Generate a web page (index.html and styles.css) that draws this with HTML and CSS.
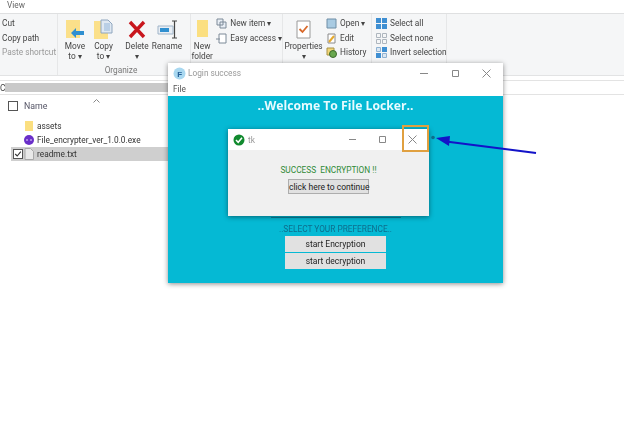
FILE: index.html
```html
<!DOCTYPE html>
<html lang="en">
<head>
    <meta charset="UTF-8">
    <title>File Locker</title>
    <link rel="stylesheet" href="styles.css">
</head>
<body>
    <div class="explorer">
        <div class="tabs">View</div>
        <div class="ribbon">
            <div class="group group-clip">
                <div class="small-list">
                    <span>Cut</span>
                    <span>Copy path</span>
                    <span class="muted">Paste shortcut</span>
                </div>
            </div>
            <div class="group group-organize">
                <div class="big-row">
                    <div class="big big-move">
                        <svg width="20" height="21" viewBox="0 0 20 21"><path d="M1 1h14v18H1z" fill="#fbe08a"/><path d="M19 12h-8V9l-5 5 5 5v-3h8z" fill="#2f8fd0"/></svg>
                        <span>Move<br>to ▾</span>
                    </div>
                    <div class="big big-copy">
                        <svg width="20" height="21" viewBox="0 0 20 21"><path d="M0 2h14v18H0z" fill="#fbe08a"/><path d="M7 1h7l4 4v9H7z" fill="#dfe8f2" stroke="#8fa6bf"/><path d="M10 4h6v8h-6z" fill="#b9cfe6"/></svg>
                        <span>Copy<br>to ▾</span>
                    </div>
                    <div class="big big-delete">
                        <svg width="18" height="21" viewBox="0 0 18 21"><path d="M2 3l14 15M16 3L2 18" stroke="#c8161d" stroke-width="3.4" fill="none"/></svg>
                        <span>Delete<br>▾</span>
                    </div>
                    <div class="big big-rename">
                        <svg width="21" height="21" viewBox="0 0 21 21"><path d="M1 7h15v8H1z" fill="#e8eef5" stroke="#9fb4c8"/><path d="M3 9h9v4H3z" fill="#2f8fd0"/><path d="M15 2h5M15 19h5M17.500 2v17" stroke="#444" stroke-width="1.200" fill="none"/></svg>
                        <span>Rename</span>
                    </div>
                </div>
                <div class="group-name">Organize</div>
            </div>
            <div class="group group-new">
                <div class="big big-folder">
                    <svg width="13" height="21" viewBox="0 0 13 21"><path d="M1 1h11v17H1z" fill="#fbdf80"/></svg>
                    <span>New<br>folder</span>
                </div>
                <div class="small-list">
                    <span class="with-icon">
                        <svg width="11" height="11" viewBox="0 0 11 11"><path d="M1 1h6v6H1zM4 4h6v6H4z" fill="#e8eef5" stroke="#7d8a98"/></svg>New item ▾
                    </span>
                    <span class="with-icon">
                        <svg width="11" height="11" viewBox="0 0 11 11"><path d="M3 1h7v9H3z" fill="#fff" stroke="#7d8a98"/><path d="M0 6h4" stroke="#7d8a98"/></svg>Easy access ▾
                    </span>
                </div>
            </div>
            <div class="group group-open">
                <div class="big big-props">
                    <svg width="15" height="21" viewBox="0 0 15 21"><path d="M1 2h13v17H1z" fill="#fff" stroke="#9a9a9a"/><path d="M3.500 10l3 3 5-6" stroke="#d9692a" stroke-width="1.800" fill="none"/></svg>
                    <span>Properties<br>▾</span>
                </div>
                <div class="small-list">
                    <span class="with-icon">
                        <svg width="11" height="11" viewBox="0 0 11 11"><path d="M1 1h9v9H1z" fill="#a9cbe2" stroke="#6f8ea6"/></svg>Open ▾
                    </span>
                    <span class="with-icon">
                        <svg width="11" height="11" viewBox="0 0 11 11"><path d="M2 1h7v9H2z" fill="#fff" stroke="#8a8a8a"/><path d="M3 9l5-6" stroke="#e5a92e" stroke-width="2"/></svg>Edit
                    </span>
                    <span class="with-icon">
                        <svg width="11" height="11" viewBox="0 0 11 11"><path d="M1 1h7v7H1z" fill="#f2d77a" stroke="#a89245"/><circle cx="7" cy="7" r="3.500" fill="#6aa84f" stroke="#3d6b2c"/></svg>History
                    </span>
                </div>
            </div>
            <div class="group group-select">
                <div class="small-list">
                    <span class="with-icon">
                        <svg width="11" height="11" viewBox="0 0 11 11"><path d="M0 0h5v5H0zM6 0h5v5H6zM0 6h5v5H0zM6 6h5v5H6z" fill="#3f8fd2"/></svg>Select all
                    </span>
                    <span class="with-icon">
                        <svg width="11" height="11" viewBox="0 0 11 11"><path d="M.5.500h4v4h-4zM6.500.500h4v4h-4zM.5 6.500h4v4h-4zM6.500 6.500h4v4h-4z" fill="none" stroke="#aeb6be"/></svg>Select none
                    </span>
                    <span class="with-icon">
                        <svg width="11" height="11" viewBox="0 0 11 11"><path d="M6 0h5v5H6zM0 6h5v5H0z" fill="#3f8fd2"/><path d="M.5.500h4v4h-4zM6.500 6.500h4v4h-4z" fill="#dbe7f2" stroke="#8fb2d2"/></svg>Invert selection
                    </span>
                </div>
            </div>
        </div>
        <div class="address">
            <span class="address-c">C</span>
            <div class="address-blur"></div>
        </div>
        <div class="files">
            <svg class="sort" width="7" height="4" viewBox="0 0 7 4"><path d="M.5 3.500l3-3 3 3" stroke="#888" fill="none"/></svg>
            <div class="file-head">
                <span class="check"></span>
                <span>Name</span>
            </div>
            <div class="file-row">
                <span class="check-space"></span>
                <svg width="10" height="12" viewBox="0 0 10 12"><path d="M1 1h8v10H1z" fill="#fbdf80"/></svg>
                <span>assets</span>
            </div>
            <div class="file-row">
                <span class="check-space"></span>
                <svg width="10" height="12" viewBox="0 0 10 12"><circle cx="5" cy="6" r="5" fill="#6a2fc9"/><path d="M2 6h2M6 6h2" stroke="#e6d5ff"/></svg>
                <span>File_encrypter_ver_1.0.0.exe</span>
            </div>
            <div class="file-row selected">
                <span class="check checked">
                    <svg width="8" height="8" viewBox="0 0 10 10"><path d="M1.500 5l2.500 2.500 4.500-5.500" stroke="#333" stroke-width="1.400" fill="none"/></svg>
                </span>
                <svg width="10" height="12" viewBox="0 0 10 12"><path d="M1 .5h5.500l3 3v8H1z" fill="#e9e9e9" stroke="#a9a9a9"/></svg>
                <span>readme.txt</span>
            </div>
        </div>
    </div>

    <div class="window login">
        <div class="titlebar login-bar">
            <svg width="13" height="13" viewBox="0 0 13 13"><circle cx="6.500" cy="6.500" r="6" fill="#a9d8f0"/><text x="4.300" y="9.500" class="logo-f">F</text></svg>
            <span class="title">Login success</span>
            <div class="controls">
                <svg width="9" height="9" viewBox="0 0 9 9"><path d="M0 4.500h8" stroke="#888"/></svg>
                <svg width="9" height="9" viewBox="0 0 9 9"><path d="M1.500 1.500h6v6h-6z" stroke="#888" fill="none"/></svg>
                <svg width="9" height="9" viewBox="0 0 9 9"><path d="M.5.500l8 8M8.500.500l-8 8" stroke="#888" fill="none"/></svg>
            </div>
        </div>
        <div class="menu">File</div>
        <div class="teal">
            <h1>..Welcome To File Locker..</h1>
            <div class="hidden-line"></div>
            <p class="select-text">..SELECT YOUR PREFERENCE..</p>
            <button class="pref-btn">start Encryption</button>
            <button class="pref-btn">start decryption</button>
        </div>
    </div>

    <div class="window popup">
        <div class="titlebar popup-bar">
            <svg width="12" height="12" viewBox="0 0 12 12"><circle cx="6" cy="6" r="5.500" fill="#118a2e"/><path d="M3 6l2.200 2.300L9 3.800" stroke="#fff" stroke-width="1.500" fill="none"/></svg>
            <span class="title">tk</span>
            <div class="controls popup-controls">
                <svg width="9" height="9" viewBox="0 0 9 9"><path d="M1 4.500h7" stroke="#888"/></svg>
                <svg width="9" height="9" viewBox="0 0 9 9"><path d="M1.500 1.500h6v6h-6z" stroke="#888" fill="none"/></svg>
                <svg width="9" height="9" viewBox="0 0 9 9"><path d="M.5.500l8 8M8.500.500l-8 8" stroke="#888" fill="none"/></svg>
            </div>
        </div>
        <div class="popup-body">
            <p class="success">SUCCESS&nbsp; ENCRYPTION !!</p>
            <button class="continue">click here to continue</button>
        </div>
    </div>

    <div class="close-mark"></div>
    <svg class="arrow" width="112" height="24" viewBox="0 0 112 24">
        <circle cx="5" cy="3.500" r="1.800" fill="#0e6d8c"/>
        <path d="M108 19L18 7.500" stroke="#1313c8" stroke-width="2.200" fill="none"/>
        <path d="M8 4l14-2-1 10z" fill="#1313c8"/>
    </svg>
</body>
</html>
```

FILE: styles.css
```css
body {
    margin: 0;
    width: 624px;
    height: 425px;
    overflow: hidden;
    position: relative;
    background: #fff;
    font-family: Roboto, "Open Sans", sans-serif;
    font-size: 8.3px;
    color: #444;
    filter: blur(0.3px);
}
.tabs {
    height: 13px;
    padding-left: 7px;
    line-height: 11px;
    color: #666;
}
.ribbon {
    height: 61px;
    display: flex;
    background: #f5f6f7;
    border-top: 1px solid #dfe0e1;
    border-bottom: 1px solid #e2e3e4;
}
.group {
    display: flex;
    border-right: 1px solid #e6e7e8;
    padding-top: 2px;
    box-sizing: border-box;
}
.group-clip {
    width: 58px;
    padding-left: 2px;
}
.group-organize {
    width: 133px;
    flex-direction: column;
}
.group-new {
    width: 92px;
    gap: 3px;
}
.group-open {
    width: 89px;
    gap: 3px;
}
.group-select {
    width: 75px;
    padding-left: 4px;
}
.small-list {
    display: flex;
    flex-direction: column;
    line-height: 14.7px;
    white-space: nowrap;
}
.with-icon {
    display: flex;
    align-items: center;
    gap: 3px;
}
.muted {
    color: #999;
}
.big-row {
    display: flex;
    height: 49px;
}
.big {
    display: flex;
    flex-direction: column;
    align-items: center;
    text-align: center;
    line-height: 9.500px;
    gap: 2px;
    padding-top: 3px;
}
.big-move {
    width: 30px;
    margin-left: 2px;
}
.big-copy {
    width: 27px;
}
.big-delete {
    width: 28px;
    margin-left: 6px;
}
.big-rename {
    width: 30px;
    margin-left: 1px;
}
.big-folder {
    width: 24px;
}
.big-props {
    width: 39px;
    margin-left: 1px;
}
.group-name {
    text-align: center;
    color: #777;
    line-height: 10px;
    padding-right: 6px;
}
.address {
    margin-top: 4px;
    height: 13px;
    border-top: 1px solid #e3e3e3;
    border-bottom: 1px solid #e3e3e3;
    display: flex;
    align-items: center;
}
.address-c {
    width: 5px;
    overflow: hidden;
}
.address-blur {
    width: 163px;
    height: 9px;
    background: #c9c9c9;
}
.files {
    position: relative;
    padding-top: 4px;
}
.sort {
    position: absolute;
    left: 93px;
    top: 4px;
}
.file-head {
    display: flex;
    align-items: center;
    gap: 6px;
    height: 14px;
    padding-left: 8px;
    margin-bottom: 6px;
    font-size: 8.800px;
    color: #556;
}
.check {
    width: 8px;
    height: 8px;
    border: 1px solid #555;
    display: flex;
    flex: none;
}
.file-row {
    display: flex;
    align-items: center;
    height: 14px;
    width: 160px;
    margin-left: 11px;
    gap: 3px;
    color: #333;
    font-size: 8.300px;
    white-space: nowrap;
}
.check-space {
    width: 10px;
}
.selected {
    background: #cfcfcf;
    width: 157px;
}
.checked {
    margin-left: 2px;
    margin-right: -2px;
    background: #fff;
}
.window {
    position: absolute;
    display: flex;
    flex-direction: column;
    box-shadow: 0 1px 5px rgba(0, 0, 0, 0.45);
    background: #fff;
}
.login {
    left: 168px;
    top: 63px;
    width: 335px;
    height: 220px;
}
.popup {
    left: 228px;
    top: 129px;
    width: 201px;
    height: 87px;
}
.titlebar {
    display: flex;
    align-items: center;
    flex: none;
}
.login-bar {
    height: 20px;
    padding-left: 5px;
    gap: 2px;
}
.popup-bar {
    height: 21px;
    padding-left: 5px;
    gap: 3px;
}
.title {
    color: #999;
    font-size: 8.300px;
}
.logo-f {
    font-family: "Liberation Sans", sans-serif;
    font-size: 8px;
    font-weight: bold;
    fill: #245f96;
}
.controls {
    margin-left: auto;
    display: flex;
    gap: 22px;
    padding-right: 12px;
}
.popup-controls {
    gap: 21px;
    padding-right: 12px;
}
.menu {
    height: 13px;
    line-height: 13px;
    padding-left: 5px;
    color: #555;
}
.teal {
    flex: 1;
    background: #05b9d4;
    display: flex;
    flex-direction: column;
    align-items: center;
}
h1 {
    margin: 1px 0 0;
    height: 120px;
    color: #e8fbff;
    font-family: "Open Sans", sans-serif;
    font-size: 12.2px;
    line-height: 17px;
    font-weight: 700;
}
.hidden-line {
    width: 130px;
    height: 1px;
    margin-bottom: 5px;
    background: #0b7f9a;
}
.select-text {
    margin: 0;
    height: 13px;
    line-height: 12px;
    font-size: 8.300px;
    color: #0e6d8c;
}
.pref-btn {
    width: 101px;
    height: 16px;
    margin: 0 0 1px;
    padding: 0;
    border: 0;
    background: #e1e1e1;
    font-family: Roboto, sans-serif;
    font-size: 8.500px;
    color: #222;
}
.popup-body {
    flex: 1;
    background: #f0f0f0;
    display: flex;
    flex-direction: column;
    align-items: center;
}
.success {
    margin: 14px 0 3px;
    color: #2f8a36;
    font-size: 8.300px;
    line-height: 12px;
}
.continue {
    width: 81px;
    height: 15px;
    padding: 0;
    background: #e1e1e1;
    border: 1px solid #adadad;
    font-family: Roboto, sans-serif;
    font-size: 8.500px;
    color: #222;
    white-space: nowrap;
}
.close-mark {
    position: absolute;
    left: 402px;
    top: 125px;
    width: 23px;
    height: 23px;
    border: 2px solid #e0a040;
}
.arrow {
    position: absolute;
    left: 428px;
    top: 134px;
}
```
